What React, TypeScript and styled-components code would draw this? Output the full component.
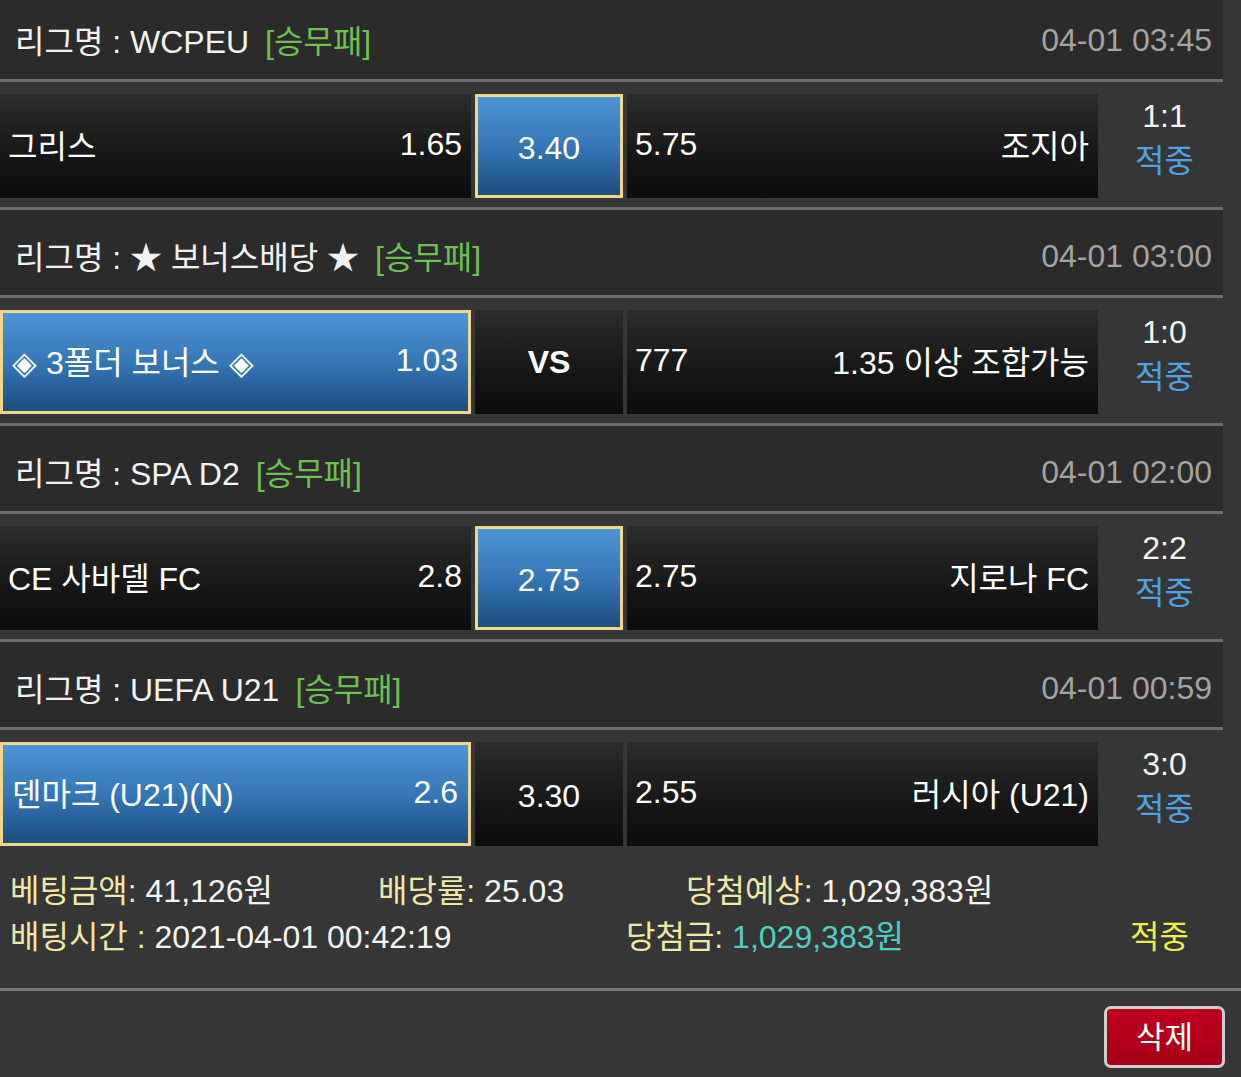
import React from "react";
import styled, { createGlobalStyle } from "styled-components";

const GlobalStyle = createGlobalStyle`
  html, body {
    margin: 0;
    padding: 0;
    background: #363636;
  }
  body {
    font-family: "Liberation Sans", "Noto Sans CJK KR", sans-serif;
    color: #ffffff;
    overflow: hidden;
  }
`;

const Page = styled.div`
  margin-top: -6px;
  width: 1241px;
  background: #363636;
`;

const League = styled.div`
  width: 1223px;
`;

const LeagueHeader = styled.div`
  height: 85px;
  box-sizing: border-box;
  padding: 5px 11px 0 15px;
  background: #2b2b2b;
  display: flex;
  align-items: center;
  justify-content: space-between;
  font-size: 32px;
`;

const LeagueName = styled.span`
  color: #f2f2f2;
`;

const BetType = styled.span`
  color: #6cc050;
  margin-left: 16px;
`;

const LeagueTime = styled.span`
  color: #a3a3a3;
  padding-top: 2px;
`;

const Sep = styled.div`
  height: 3px;
  background: #6c6c6c;
`;

const MatchRow = styled.div`
  height: 125px;
  box-sizing: border-box;
  padding: 12px 0 9px;
  display: flex;
  gap: 4px;
  background: #363636;
`;

const Pick = styled.div<{ $on?: boolean; $w: number; $center?: boolean }>`
  width: ${(p) => p.$w}px;
  flex: none;
  box-sizing: border-box;
  display: flex;
  align-items: center;
  justify-content: ${(p) => (p.$center ? "center" : "space-between")};
  padding: ${(p) =>
    p.$center ? "4px 0 0" : p.$on ? "0 10px 4px 9px" : "0 9px 4px 8px"};
  font-size: 32px;
  color: #ffffff;
  background: ${(p) =>
    p.$on
      ? "linear-gradient(to bottom, #4e95d6 0%, #3677b6 50%, #1b4d80 100%)"
      : "linear-gradient(to bottom, #2c2c2c 0%, #161616 60%, #0c0c0c 100%)"};
  border: ${(p) => (p.$on ? "3px solid #f1d68e" : "none")};
`;

const Vs = styled.span`
  font-weight: 700;
  font-size: 32px;
  margin-top: -4px;
`;

const Result = styled.div`
  flex: 1;
  display: flex;
  flex-direction: column;
  align-items: center;
  justify-content: center;
  font-size: 32px;
  line-height: 45px;
  padding-bottom: 14px;
  padding-left: 4px;
`;

const Score = styled.span`
  color: #f4f4f4;
`;

const Hit = styled.span<{ $tone?: "blue" | "yellow" }>`
  color: ${(p) => (p.$tone === "yellow" ? "#efee48" : "#4fa2e2")};
`;

const Summary = styled.div`
  height: 133px;
  box-sizing: border-box;
  padding: 13px 0 0 10px;
  font-size: 32px;
  line-height: 46px;
`;

const SummaryLine = styled.div<{ $cols: string }>`
  display: grid;
  grid-template-columns: ${(p) => p.$cols};
  white-space: nowrap;
`;

const Label = styled.span`
  color: #efe7a6;
`;

const Value = styled.span<{ $teal?: boolean }>`
  color: ${(p) => (p.$teal ? "#4fcfc2" : "#f4f4f4")};
`;

const BottomRule = styled.div`
  height: 3px;
  background: #757575;
`;

const Footer = styled.div`
  height: 86px;
  display: flex;
  justify-content: flex-end;
  align-items: flex-start;
  padding: 15px 16px 0 0;
`;

const DeleteButton = styled.button`
  width: 121px;
  height: 62px;
  box-sizing: border-box;
  border: 3px solid #cfcfcf;
  border-radius: 7px;
  background: linear-gradient(to bottom, #c0001e, #a50018);
  color: #ffffff;
  font-family: "Liberation Sans", "Noto Sans CJK KR", sans-serif;
  font-size: 31px;
  padding: 0 0 5px;
`;

type Side = { name: string; odds: string };

type Game = {
  league: string;
  time: string;
  home: Side;
  draw: string;
  away: Side;
  pick: "home" | "draw" | "away";
  score: string;
};

const games: Game[] = [
  {
    league: "WCPEU",
    time: "04-01 03:45",
    home: { name: "그리스", odds: "1.65" },
    draw: "3.40",
    away: { name: "조지아", odds: "5.75" },
    pick: "draw",
    score: "1:1",
  },
  {
    league: "★ 보너스배당 ★",
    time: "04-01 03:00",
    home: { name: "◈ 3폴더 보너스 ◈", odds: "1.03" },
    draw: "VS",
    away: { name: "1.35 이상 조합가능", odds: "777" },
    pick: "home",
    score: "1:0",
  },
  {
    league: "SPA D2",
    time: "04-01 02:00",
    home: { name: "CE 사바델 FC", odds: "2.8" },
    draw: "2.75",
    away: { name: "지로나 FC", odds: "2.75" },
    pick: "draw",
    score: "2:2",
  },
  {
    league: "UEFA U21",
    time: "04-01 00:59",
    home: { name: "덴마크 (U21)(N)", odds: "2.6" },
    draw: "3.30",
    away: { name: "러시아 (U21)", odds: "2.55" },
    pick: "home",
    score: "3:0",
  },
];

const App: React.FC = () => {
  return (
    <>
      <GlobalStyle />
      <Page>
        {games.map((g, i) => (
          <League key={i}>
            <LeagueHeader>
              <span>
                <LeagueName>리그명 : {g.league}</LeagueName>
                <BetType>[승무패]</BetType>
              </span>
              <LeagueTime>{g.time}</LeagueTime>
            </LeagueHeader>
            <Sep />
            <MatchRow>
              <Pick $w={471} $on={g.pick === "home"}>
                <span>{g.home.name}</span>
                <span>{g.home.odds}</span>
              </Pick>
              <Pick $w={148} $center $on={g.pick === "draw"}>
                {g.draw === "VS" ? <Vs>VS</Vs> : <span>{g.draw}</span>}
              </Pick>
              <Pick $w={471} $on={g.pick === "away"}>
                <span>{g.away.odds}</span>
                <span>{g.away.name}</span>
              </Pick>
              <Result>
                <Score>{g.score}</Score>
                <Hit>적중</Hit>
              </Result>
            </MatchRow>
            {i < games.length - 1 && <Sep />}
          </League>
        ))}
        <Summary>
          <SummaryLine $cols="368px 308px 1fr">
            <span>
              <Label>베팅금액:</Label> <Value>41,126원</Value>
            </span>
            <span>
              <Label>배당률:</Label> <Value>25.03</Value>
            </span>
            <span>
              <Label>당첨예상:</Label> <Value>1,029,383원</Value>
            </span>
          </SummaryLine>
          <SummaryLine $cols="616px 504px 1fr">
            <span>
              <Label>배팅시간 :</Label> <Value>2021-04-01 00:42:19</Value>
            </span>
            <span>
              <Label>당첨금:</Label> <Value $teal>1,029,383원</Value>
            </span>
            <span>
              <Hit $tone="yellow">적중</Hit>
            </span>
          </SummaryLine>
        </Summary>
        <BottomRule />
        <Footer>
          <DeleteButton>삭제</DeleteButton>
        </Footer>
      </Page>
    </>
  );
};

export default App;
